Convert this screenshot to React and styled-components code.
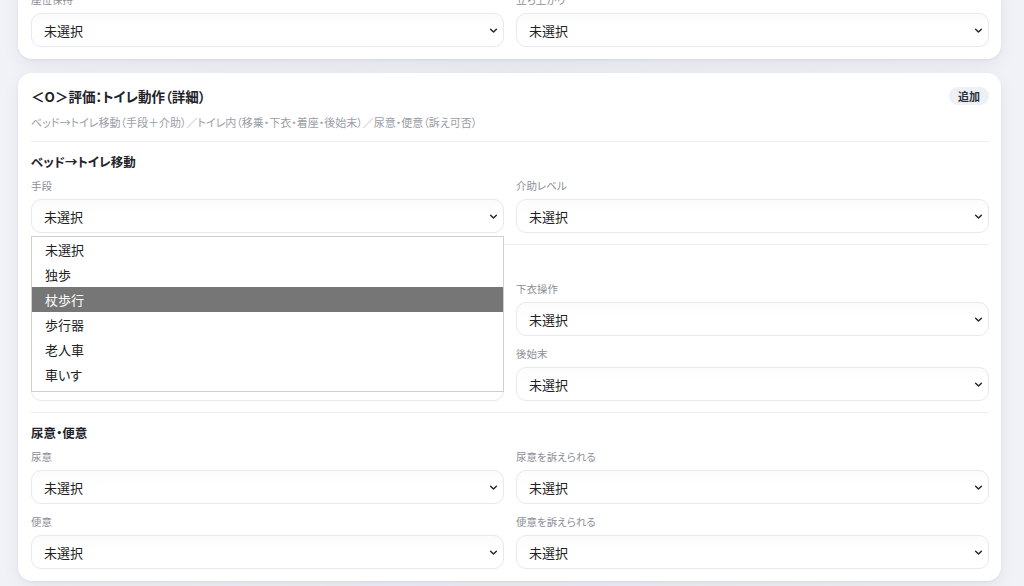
import styled, { createGlobalStyle } from 'styled-components';

const GlobalStyle = createGlobalStyle`
  html, body {
    margin: 0;
    padding: 0;
    height: 586px;
    overflow: hidden;
    background: #eef0f5;
    font-family: 'Noto Sans CJK JP', 'Noto Sans', sans-serif;
    color: #222;
    font-feature-settings: 'palt';
  }
`;

const Page = styled.div`
  display: flex;
  flex-direction: column;
  gap: 14px;
  padding: 0 23px 0 18px;
  background: linear-gradient(90deg, #f1f2f7 0%, #eceef4 50%, #f1f2f7 100%);
  min-height: 586px;
`;

const Card = styled.section`
  background: #fff;
  border-radius: 14px;
  padding: 13px 12px 12px 13px;
  box-shadow: 0 1px 3px rgba(15, 23, 42, 0.05), 0 6px 18px rgba(15, 23, 42, 0.06);
  margin-top: ${(p) => (p.$offset ? `${p.$offset}px` : '0')};
`;

const Header = styled.div`
  display: flex;
  justify-content: space-between;
  align-items: center;
  height: 20px;
`;

const Title = styled.h2`
  margin: 0;
  font-size: 13.5px;
  font-weight: 700;
  line-height: 20px;
  color: #1f2329;
`;

const AddButton = styled.button`
  border: none;
  background: #eef0f5;
  border-radius: 9px;
  height: 18px;
  padding: 0 9px;
  font-family: inherit;
  font-size: 11px;
  font-weight: 700;
  color: #2a2f38;
  cursor: pointer;
`;

const Subtitle = styled.p`
  margin: 8px 0 11px;
  font-size: 11px;
  line-height: 16px;
  color: #9a9ea6;
`;

const Section = styled.div`
  border-top: 1px solid #eceef2;
  padding: 11px 0 ${(p) => (p.$last ? '0' : '11px')};
`;

const SectionTitle = styled.h3`
  margin: 0 0 8px;
  font-size: 12.5px;
  font-weight: 700;
  line-height: 18px;
  color: #1f2329;
`;

const Grid = styled.div`
  display: grid;
  grid-template-columns: 1fr 1fr;
  column-gap: 12px;
  row-gap: 11px;
`;

const Field = styled.div`
  position: relative;
  display: flex;
  flex-direction: column;
  gap: 6px;
`;

const Label = styled.label`
  font-size: 10.5px;
  line-height: 14px;
  color: #8a8e96;
`;

const SelectBox = styled.div`
  height: 34px;
  box-sizing: border-box;
  border: 1px solid #e7e9ee;
  border-radius: 10px;
  background: linear-gradient(180deg, #fbfbfc 0%, #ffffff 40%);
  display: flex;
  align-items: center;
  justify-content: space-between;
  padding: 0 5px 0 12px;
  font-size: 13px;
  color: #222;
`;

const Chevron = () => (
  <svg width="9" height="9" viewBox="0 0 9 9" fill="none">
    <path d="M1.6 3.2 L4.5 6 L7.4 3.2" stroke="#222" strokeWidth="1.4" strokeLinecap="round" strokeLinejoin="round" />
  </svg>
);

const Menu = styled.ul`
  position: absolute;
  top: calc(100% + 3px);
  left: 0;
  right: 0;
  z-index: 5;
  margin: 0;
  padding: 0 0 4px;
  list-style: none;
  background: #fff;
  border: 1px solid #cfcfcf;
`;

const Option = styled.li`
  height: 25px;
  line-height: 25px;
  padding-left: 13px;
  font-size: 13px;
  color: ${(p) => (p.$active ? '#fff' : '#222')};
  background: ${(p) => (p.$active ? '#767676' : 'transparent')};
`;

const Select = ({ label, open, options, active }) => (
  <Field>
    <Label>{label}</Label>
    <SelectBox>
      <span>未選択</span>
      <Chevron />
    </SelectBox>
    {open && (
      <Menu>
        {options.map((o) => (
          <Option key={o} $active={o === active}>
            {o}
          </Option>
        ))}
      </Menu>
    )}
  </Field>
);

const moveOptions = ['未選択', '独歩', '杖歩行', '歩行器', '老人車', '車いす'];

const App = () => (
  <>
    <GlobalStyle />
    <Page>
      <Card $offset={-20}>
        <Grid>
          <Select label="座位保持" />
          <Select label="立ち上がり" />
        </Grid>
      </Card>
      <Card>
        <Header>
          <Title>＜O＞評価：トイレ動作（詳細）</Title>
          <AddButton>追加</AddButton>
        </Header>
        <Subtitle>
          ベッド→トイレ移動（手段＋介助）／トイレ内（移乗・下衣・着座・後始末）／尿意・便意（訴え可否）
        </Subtitle>
        <Section>
          <SectionTitle>ベッド→トイレ移動</SectionTitle>
          <Grid>
            <Select label="手段" open options={moveOptions} active="杖歩行" />
            <Select label="介助レベル" />
          </Grid>
        </Section>
        <Section>
          <SectionTitle>トイレ内</SectionTitle>
          <Grid>
            <Select label="移乗" />
            <Select label="下衣操作" />
            <Select label="着座" />
            <Select label="後始末" />
          </Grid>
        </Section>
        <Section $last>
          <SectionTitle>尿意・便意</SectionTitle>
          <Grid>
            <Select label="尿意" />
            <Select label="尿意を訴えられる" />
            <Select label="便意" />
            <Select label="便意を訴えられる" />
          </Grid>
        </Section>
      </Card>
    </Page>
  </>
);

export default App;
